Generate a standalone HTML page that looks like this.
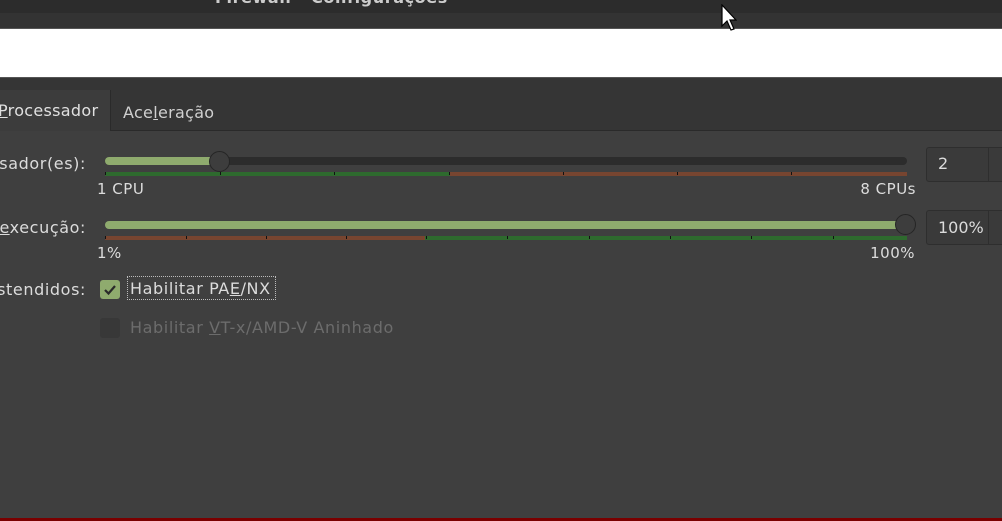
<!DOCTYPE html>
<html><head><meta charset="utf-8"><style>
*{margin:0;padding:0;box-sizing:border-box}
body{width:1002px;height:521px;overflow:hidden;background:#3f3f3f;font-family:"DejaVu Sans","Liberation Sans",sans-serif;font-size:16px;letter-spacing:0.6px;color:#dcdcdc;position:relative}
.a{position:absolute}
.t{position:absolute;white-space:nowrap}
.k{position:absolute;width:1px;height:3px;background:#111}
.s{font-size:15px;letter-spacing:0.5px}
</style></head><body>
<div class="a" style="left:0;top:0;width:1002px;height:13px;background:#2c2c2c"></div>
<div class="a" style="left:0;top:13px;width:1002px;height:15px;background:#333"></div>
<div class="t" style="left:215px;top:-12px;font-weight:bold;color:#ccc;font-size:16px">Firewall - Configurações</div>
<div class="a" style="left:0;top:28px;width:1002px;height:1px;background:#555"></div>
<div class="a" style="left:0;top:29px;width:1002px;height:48px;background:#fff"></div>
<div class="a" style="left:0;top:77px;width:1002px;height:1px;background:#555"></div>
<div class="a" style="left:0;top:78px;width:1002px;height:53px;background:#353535"></div>
<div class="a" style="left:0;top:90px;width:111px;height:41px;background:#3c3c3c;border-right:1px solid #2a2a2a"></div>
<div class="a" style="left:111px;top:130px;width:891px;height:1px;background:#2a2a2a"></div>
<div class="t" style="left:-2px;top:101px;color:#e0e0e0;letter-spacing:0.3px"><u>P</u>rocessador</div>
<div class="t" style="left:123px;top:103px;color:#d0d0d0;letter-spacing:0.3px">Ace<u>l</u>eração</div>
<div class="t" style="right:916px;top:154px">ssador(es):</div>
<div class="t" style="right:916px;top:218px"><u>e</u>xecução:</div>
<div class="t" style="right:916px;top:280px">stendidos:</div>
<!-- slider 1 -->
<div class="a" style="left:105px;top:157px;width:802px;height:8px;border-radius:4px;background:#2c2c2c"></div>
<div class="a" style="left:105px;top:157px;width:115px;height:8px;border-radius:4px;background:#8fab6e"></div>
<div class="a" style="left:209px;top:151px;width:21px;height:21px;border-radius:50%;background:#3d3d3d;border:1px solid #252525"></div>
<div class="a" style="left:105px;top:172px;width:345px;height:4px;background:#2e6a2e"></div>
<div class="a" style="left:450px;top:172px;width:457px;height:4px;background:#774530"></div>
<div class="k" style="left:105px;top:172px"></div><div class="k" style="left:220px;top:172px"></div><div class="k" style="left:334px;top:172px"></div><div class="k" style="left:449px;top:172px"></div><div class="k" style="left:563px;top:172px"></div><div class="k" style="left:677px;top:172px"></div><div class="k" style="left:791px;top:172px"></div>
<div class="t s" style="left:97px;top:180px">1 CPU</div>
<div class="t s" style="right:86px;top:180px">8 CPUs</div>
<!-- slider 2 -->
<div class="a" style="left:105px;top:221px;width:800px;height:8px;border-radius:4px;background:#8fab6e"></div>
<div class="a" style="left:895px;top:214px;width:21px;height:21px;border-radius:50%;background:#3d3d3d;border:1px solid #252525"></div>
<div class="a" style="left:105px;top:236px;width:320px;height:4px;background:#774530"></div>
<div class="a" style="left:425px;top:236px;width:482px;height:4px;background:#2e6a2e"></div>
<div class="k" style="left:105px;top:236px"></div><div class="k" style="left:186px;top:236px"></div><div class="k" style="left:266px;top:236px"></div><div class="k" style="left:346px;top:236px"></div><div class="k" style="left:426px;top:236px"></div><div class="k" style="left:507px;top:236px"></div><div class="k" style="left:589px;top:236px"></div><div class="k" style="left:670px;top:236px"></div><div class="k" style="left:751px;top:236px"></div><div class="k" style="left:833px;top:236px"></div>
<div class="t s" style="left:97px;top:244px">1%</div>
<div class="t s" style="right:87px;top:244px">100%</div>
<!-- spinbuttons -->
<div class="a" style="left:926px;top:147px;width:90px;height:35px;border:1px solid #2e2e2e;border-radius:3px;background:#3a3a3a"></div>
<div class="a" style="left:988px;top:147px;width:1px;height:35px;background:#2e2e2e"></div>
<div class="t" style="left:938px;top:154px">2</div>
<div class="a" style="left:926px;top:210px;width:90px;height:35px;border:1px solid #2e2e2e;border-radius:3px;background:#3a3a3a"></div>
<div class="a" style="left:988px;top:210px;width:1px;height:35px;background:#2e2e2e"></div>
<div class="t" style="left:938px;top:218px;letter-spacing:0">100%</div>
<!-- checkboxes -->
<div class="a" style="left:100px;top:280px;width:20px;height:19px;border-radius:3px;background:#8fab6e"></div>
<svg class="a" style="left:100px;top:280px" width="20" height="19"><path d="M5 10 L8.5 13.5 L15 6" stroke="#2a2a2a" stroke-width="2.2" fill="none"/></svg>
<div class="a" style="left:127px;top:276px;width:149px;height:24px;border:1px dotted #bbb"></div>
<div class="t" style="left:130px;top:279px">Habilitar PA<u>E</u>/NX</div>
<div class="a" style="left:100px;top:318px;width:20px;height:20px;border-radius:3px;background:#383838"></div>
<div class="t" style="left:130px;top:318px;color:#6c6c6c">Habilitar <u>V</u>T-x/AMD-V Aninhado</div>
<svg class="a" style="left:721px;top:4px" width="16" height="28"><path d="M1 1 L1 22 L6 17 L10 26 L13 25 L9 16 L15 16 Z" fill="#fff" stroke="#000" stroke-width="1.2"/></svg>
<div class="a" style="left:0;top:518px;width:1002px;height:3px;background:#7a0000"></div>
</body></html>
